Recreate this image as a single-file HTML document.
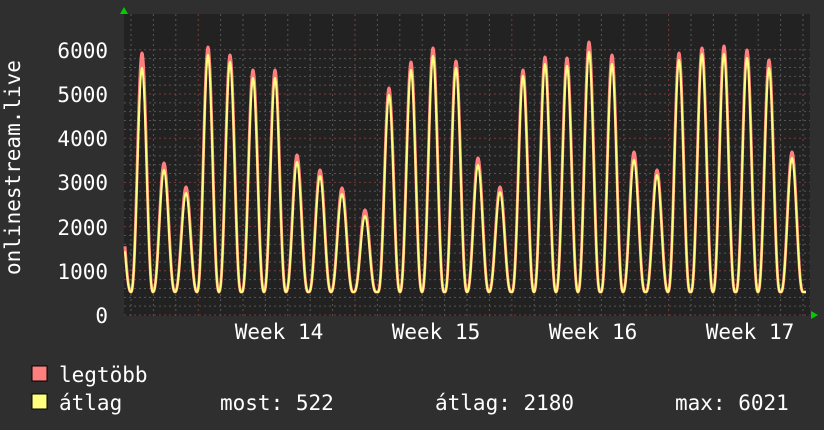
<!DOCTYPE html><html><head><style>
body{margin:0;width:824px;height:430px;background:#2f2f2f;overflow:hidden}
svg{display:block}
text{font-family:"DejaVu Sans Mono","Liberation Mono",monospace;fill:#fff}
</style></head><body>
<svg id="s" width="824" height="430" xmlns="http://www.w3.org/2000/svg">
<rect x="0" y="0" width="824" height="430" fill="#2f2f2f"/>
<rect x="124" y="14" width="686" height="302" fill="#222"/>
<g id="grid"></g>
<path id="mx" fill="none" stroke="#ff7f7f" stroke-width="3" stroke-linejoin="round"/>
<path id="av" fill="none" stroke="#ffff7f" stroke-width="2" stroke-linejoin="round"/>
<polygon points="120,14 128,14 124,7" fill="#0c0"/>
<polygon points="811,311 811,319 818,315" fill="#0c0"/>
<g font-size="21" text-anchor="end">
<text x="108" y="58">6000</text><text x="108" y="102">5000</text><text x="108" y="146">4000</text>
<text x="108" y="190">3000</text><text x="108" y="235">2000</text><text x="108" y="279">1000</text>
<text x="108" y="323">0</text></g>
<g font-size="21" text-anchor="middle">
<text x="279" y="339">Week 14</text><text x="436" y="339">Week 15</text>
<text x="593" y="339">Week 16</text><text x="750" y="339">Week 17</text></g>
<text font-size="21" transform="translate(20,275) rotate(-90)">onlinestream.live</text>
<rect x="32" y="366" width="15" height="15" fill="#ff7f7f" stroke="#000"/>
<rect x="32" y="394" width="15" height="15" fill="#ffff7f" stroke="#000"/>
<g font-size="21"><text x="59" y="382">legtöbb</text><text x="59" y="410">átlag</text>
<text x="220" y="410">most: 522</text><text x="435" y="410">átlag: 2180</text><text x="675" y="410">max: 6021</text></g>
</svg>
<script>
var g=document.getElementById('grid'),h='';
for(var i=0;i<=30;i++){var y=315-i*8.84;if(y<14)break;var red=i%5==0;
h+='<line x1="124" x2="810" y1="'+y+'" y2="'+y+'" stroke="'+(red?'#7a3a3a':'#555')+'" stroke-dasharray="2,3"/>';}
for(var x=131;x<810;x+=22.4){var red=Math.abs(((x-198)/157)-Math.round((x-198)/157))<0.02;
h+='<line y1="14" y2="318" x1="'+x+'" x2="'+x+'" stroke="'+(red?'#7a3a3a':'#555')+'" stroke-dasharray="2,3"/>';}
g.innerHTML=h;
var peaks=[[120,200,210],[142,53,68],[164,163,170],[186,187,193],[208,47,55],[230,55,62],[253,70,78],[275,70,78],[297,155,162],[320,170,176],[342,188,194],[365,210,216],[389,88,95],[411,62,70],[433,48,56],[456,61,68],[478,158,165],[500,187,192],[523,70,76],[545,57,64],[567,58,66],[589,42,52],[612,55,64],[634,152,160],[657,170,175],[679,53,60],[702,48,54],[724,46,54],[747,50,58],[769,60,68],[792,152,158]];
var base=292;
function val(x,k){var best=0,bd=1e9;for(var j=0;j<peaks.length;j++){var d=Math.abs(x-peaks[j][0]);if(d<bd){bd=d;best=j;}}
var p=peaks[best],d=x-p[0];if(Math.abs(d)>11.2)return base;
var f=0.5+0.5*Math.cos(Math.PI*d/11.2);f=Math.pow(f,1.3);return base-(base-p[k])*f;}
function path(k){var s='';for(var x=125;x<=806;x+=0.5){s+=(x==125?'M':'L')+x+','+val(x,k).toFixed(1);}return s;}
document.getElementById('mx').setAttribute('d',path(1));
document.getElementById('av').setAttribute('d',path(2));
</script>
</body></html>
